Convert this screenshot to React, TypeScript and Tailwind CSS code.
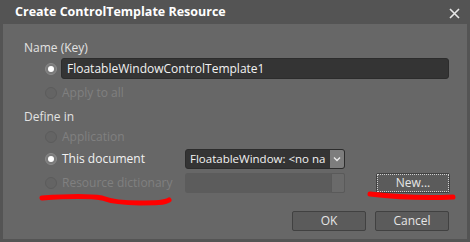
import React from 'react';

function Radio({ checked, disabled }: { checked?: boolean; disabled?: boolean }) {
  return (
    <span
      className={`flex h-[12px] w-[12px] shrink-0 items-center justify-center rounded-full border ${
        disabled ? 'border-[#5c5c5c] bg-[#646464]' : 'border-[#8a8a8a] bg-[#7a7a7a]'
      }`}
    >
      {checked && <span className="h-[6px] w-[6px] rounded-full bg-white" />}
    </span>
  );
}

function Button({ label, focused }: { label: string; focused?: boolean }) {
  return (
    <div className="flex h-[20px] w-[74px] items-center justify-center rounded-[2px] border border-[#414141] bg-[#5b5b5b] text-[12px] text-[#e6e6e6]">
      <div
        className={`flex h-full w-full items-center justify-center ${
          focused ? 'border border-dotted border-[#d0d0d0]' : ''
        }`}
      >
        {label}
      </div>
    </div>
  );
}

export default function App() {
  return (
    <div
      className="relative flex h-[242px] w-[470px] flex-col bg-[#545454] text-[12px]"
      style={{ fontFamily: '"Open Sans", "Noto Sans", sans-serif' }}
    >
      {/* title bar */}
      <div className="flex h-[24px] items-center justify-between pl-[15px] pr-[10px]">
        <span className="text-[12.5px] font-bold text-white">Create ControlTemplate Resource</span>
        <svg width="11" height="11" viewBox="0 0 11 11" className="mt-[2px]">
          <path d="M1 1 L10 10 M10 1 L1 10" stroke="#e8e8e8" strokeWidth="1.6" />
        </svg>
      </div>

      {/* body */}
      <div className="mx-[3px] mb-[3px] flex flex-1 flex-col bg-[#676767] pl-[21px] pr-[18px]">
        <div className="mt-[16px] h-[16px] leading-[16px] text-[#e2e2e2]">Name (Key)</div>

        <div className="mt-[2px] flex h-[21px] items-center gap-[4px] pl-[21px]">
          <Radio checked />
          <div className="flex h-[21px] flex-1 items-center rounded-[3px] border border-[#2c2c2c] bg-[#343434] pl-[5px] text-[#f2f2f2]">
            FloatableWindowControlTemplate1
          </div>
        </div>

        <div className="mt-[4px] flex h-[20px] items-center gap-[5px] pl-[21px] text-[#808080]">
          <Radio disabled />
          <span>Apply to all</span>
        </div>

        <div className="mt-[6px] h-[16px] leading-[16px] text-[#e2e2e2]">Define in</div>

        <div className="mt-[2px] flex h-[20px] items-center gap-[5px] pl-[21px] text-[#808080]">
          <Radio disabled />
          <span>Application</span>
        </div>

        <div className="mt-[1px] flex h-[21px] items-center pl-[21px]">
          <div className="flex w-[140px] items-center gap-[5px] text-[#f2f2f2]">
            <Radio checked />
            <span>This document</span>
          </div>
          <div className="flex h-[20px] w-[160px] items-center rounded-[3px] border border-[#2c2c2c] bg-[#343434] text-[#f2f2f2]">
            <span className="flex-1 whitespace-nowrap pl-[4px] text-[11.5px]">FloatableWindow: &lt;no na</span>
            <span className="flex h-full w-[14px] items-center justify-center rounded-r-[2px] bg-[#7d7d7d]">
              <svg width="8" height="6" viewBox="0 0 8 6">
                <path d="M1 1.5 L4 4.5 L7 1.5" fill="none" stroke="#e8e8e8" strokeWidth="1.4" />
              </svg>
            </span>
          </div>
        </div>

        <div className="mt-[4px] flex h-[20px] items-center pl-[21px]">
          <div className="flex w-[140px] items-center gap-[5px] text-[#808080]">
            <Radio disabled />
            <span className="whitespace-nowrap">Resource dictionary</span>
          </div>
          <div className="flex h-[20px] w-[160px] items-center rounded-[3px] bg-[#5c5c5c]">
            <span className="flex-1" />
            <span className="h-full w-[14px] rounded-r-[2px] border border-[#5a5a5a] bg-[#6a6a6a]" />
          </div>
          <div className="ml-auto mr-[-1px]">
            <Button label="New..." focused />
          </div>
        </div>

        <div className="mt-[18px] flex justify-end gap-[9px]">
          <Button label="OK" />
          <Button label="Cancel" />
        </div>
      </div>

      {/* red annotation strokes */}
      <svg className="pointer-events-none absolute left-0 top-0" width="470" height="242">
        <path
          d="M42 198 C70 196 90 196 102 198 C110 201 120 203 140 203 C155 203 165 203 169 200"
          fill="none"
          stroke="#ff0000"
          strokeWidth="5"
          strokeLinecap="round"
        />
        <path d="M370 194 C395 197 430 198 453 197" fill="none" stroke="#ff0000" strokeWidth="5" strokeLinecap="round" />
      </svg>
    </div>
  );
}
